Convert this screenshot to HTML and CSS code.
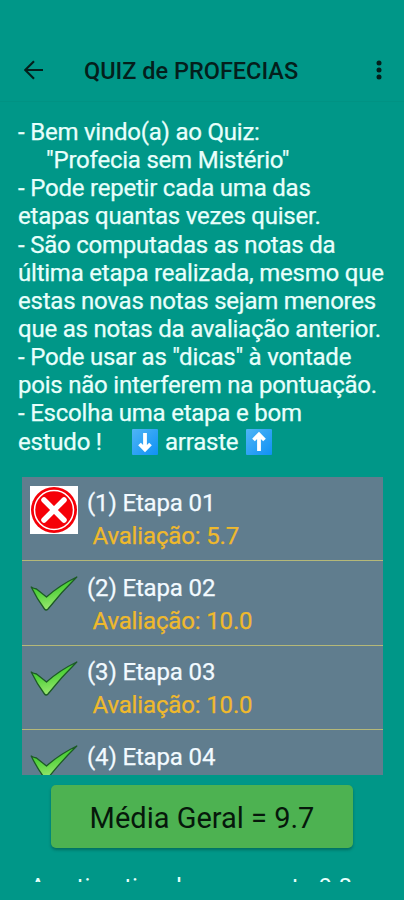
FILE: index.html
```html
<!DOCTYPE html>
<html lang="pt-BR">
<head>
<meta charset="utf-8">
<title>QUIZ de PROFECIAS</title>
<link rel="stylesheet" href="styles.css">
</head>
<body>
<svg class="defs" width="0" height="0">
  <defs>
    <linearGradient id="leaf" x1="0" y1="0" x2="0.3" y2="1">
      <stop offset="0" stop-color="#32c02c"/><stop offset="0.5" stop-color="#55d33d"/><stop offset="1" stop-color="#9be870"/>
    </linearGradient>
    <linearGradient id="sky" x1="0" y1="0" x2="1" y2="1">
      <stop offset="0" stop-color="#4fb5f5"/><stop offset="1" stop-color="#0f91f5"/>
    </linearGradient>
    <symbol id="check" viewBox="0 0 48 36">
      <path d="M1.200 11 Q3.500 12.500 6.500 13 L16.500 21 Q30 9 46.800 1 Q31 16.500 18 33 Q16 35 14.500 33 Q7 23 1.200 11Z" fill="url(#leaf)" stroke="#1c5a26" stroke-width="1.300" stroke-linejoin="round"/>
    </symbol>
  </defs>
</svg>
<header class="bar">
  <svg class="back" viewBox="0 0 20 20"><path d="M19 10H1.500M10 1.200 1.200 10 10 18.800"/></svg>
  <h1 class="title">QUIZ de PROFECIAS</h1>
  <svg class="more" viewBox="0 0 6 20"><circle cx="3" cy="3" r="2.500"/><circle cx="3" cy="10" r="2.500"/><circle cx="3" cy="17" r="2.500"/></svg>
</header>
<main class="content">
  <div class="intro">
    <p class="line">- Bem vindo(a) ao Quiz:</p>
    <p class="line indent">"Profecia sem Mistério"</p>
    <p class="line">- Pode repetir cada uma das</p>
    <p class="line">etapas quantas vezes quiser.</p>
    <p class="line">- São computadas as notas da</p>
    <p class="line">última etapa realizada, mesmo que</p>
    <p class="line">estas novas notas sejam menores</p>
    <p class="line">que as notas da avaliação anterior.</p>
    <p class="line">- Pode usar as "dicas" à vontade</p>
    <p class="line">pois não interferem na pontuação.</p>
    <p class="line">- Escolha uma etapa e bom</p>
    <p class="line drag"><span class="study">estudo !</span><svg class="key" viewBox="0 0 26 26"><rect class="face" width="26" height="26" rx="1"/><path d="M13 4V20M7.500 15 13 20.500 18.500 15"/></svg><span class="word">arraste</span><svg class="key" viewBox="0 0 26 26"><rect class="face" width="26" height="26" rx="1"/><path d="M13 22V6M7.500 11 13 5.500 18.500 11"/></svg></p>
  </div>
  <ul class="list">
    <li class="row">
      <svg class="icon" viewBox="0 0 48 48"><rect width="48" height="48" fill="#fff"/><circle cx="24" cy="24" r="23" fill="#f50008"/><circle cx="24" cy="24" r="19.500" fill="none" stroke="#fff" stroke-width="1.500"/><path d="M14 14 34 34M34 14 14 34" stroke="#fff" stroke-width="5.500" stroke-linecap="round"/></svg>
      <div class="info"><span class="name">(1) Etapa 01</span><span class="score">Avaliação: 5.7</span></div>
    </li>
    <li class="row">
      <svg class="icon"><use href="#check"/></svg>
      <div class="info"><span class="name">(2) Etapa 02</span><span class="score">Avaliação: 10.0</span></div>
    </li>
    <li class="row">
      <svg class="icon"><use href="#check"/></svg>
      <div class="info"><span class="name">(3) Etapa 03</span><span class="score">Avaliação: 10.0</span></div>
    </li>
    <li class="row">
      <svg class="icon"><use href="#check"/></svg>
      <div class="info"><span class="name">(4) Etapa 04</span><span class="score">Avaliação: 10.0</span></div>
    </li>
  </ul>
  <button class="average">Média Geral = 9.7</button>
  <p class="footer">A estimativa de seu acerto 9.8</p>
</main>
</body>
</html>
```
FILE: styles.css
```css
* { box-sizing: border-box; }
body { margin: 0; width: 404px; height: 900px; overflow: hidden; background: #009788; font-family: Roboto, sans-serif; }
.defs { display: block; }
.bar { display: flex; align-items: center; height: 102px; padding: 39px 22px 0 24px; border-bottom: 1px solid #019283; }
.back { width: 20px; height: 20px; fill: none; stroke: #041f1c; stroke-width: 2.2; }
.title { margin: 1px 0 0 40px; font-size: 23.500px; font-weight: 500; color: #041f1c; white-space: nowrap; }
.more { width: 6px; height: 20px; margin-left: auto; fill: #041f1c; }
.content { display: flex; flex-direction: column; }
.intro { padding: 16px 0 0 18px; font-size: 24px; letter-spacing: -0.220px; line-height: 28.150px; color: #e8fffb; -webkit-text-stroke: 0.250px #e8fffb; }
.line { margin: 0; height: 28.150px; white-space: nowrap; }
.indent { padding-left: 28px; }
.drag { display: flex; align-items: center; }
.study { width: 114px; }
.key { width: 26px; height: 26px; fill: none; stroke: #fff; stroke-width: 3.800; }
.face { fill: url(#sky); stroke: none; }
.word { width: 81px; padding-left: 7px; margin-right: 7px; }
.list { list-style: none; margin: 21px 21px 0 22px; padding: 0; height: 298px; overflow: hidden; background: #607d8e; }
.row { display: flex; height: 84.500px; padding: 9px 0 0 8px; border-bottom: 1.500px solid #b5b878; }
.icon { flex: none; width: 48px; height: 48px; }
.info { display: flex; flex-direction: column; padding: 1.500px 0 0 9px; font-size: 24px; letter-spacing: -0.150px; line-height: 33px; }
.name { color: #f2faff; -webkit-text-stroke: 0.250px #f2faff; }
.score { padding-left: 5.500px; color: #efb92c; -webkit-text-stroke: 0.250px #efb92c; }
.average { align-self: center; width: 302px; height: 63px; margin: 10px 0 0; padding: 3px 0 0; border: 0; border-radius: 5px; background: #4db251; box-shadow: 0 2px 3px rgb(0 50 40 / 40%); font: 29px Roboto, sans-serif; color: #06180b; }
.footer { width: 330px; height: 6px; margin: 28px 0 0 30px; overflow: hidden; font-size: 24px; letter-spacing: -0.030px; line-height: 22px; color: #e8fffb; white-space: nowrap; }
```
